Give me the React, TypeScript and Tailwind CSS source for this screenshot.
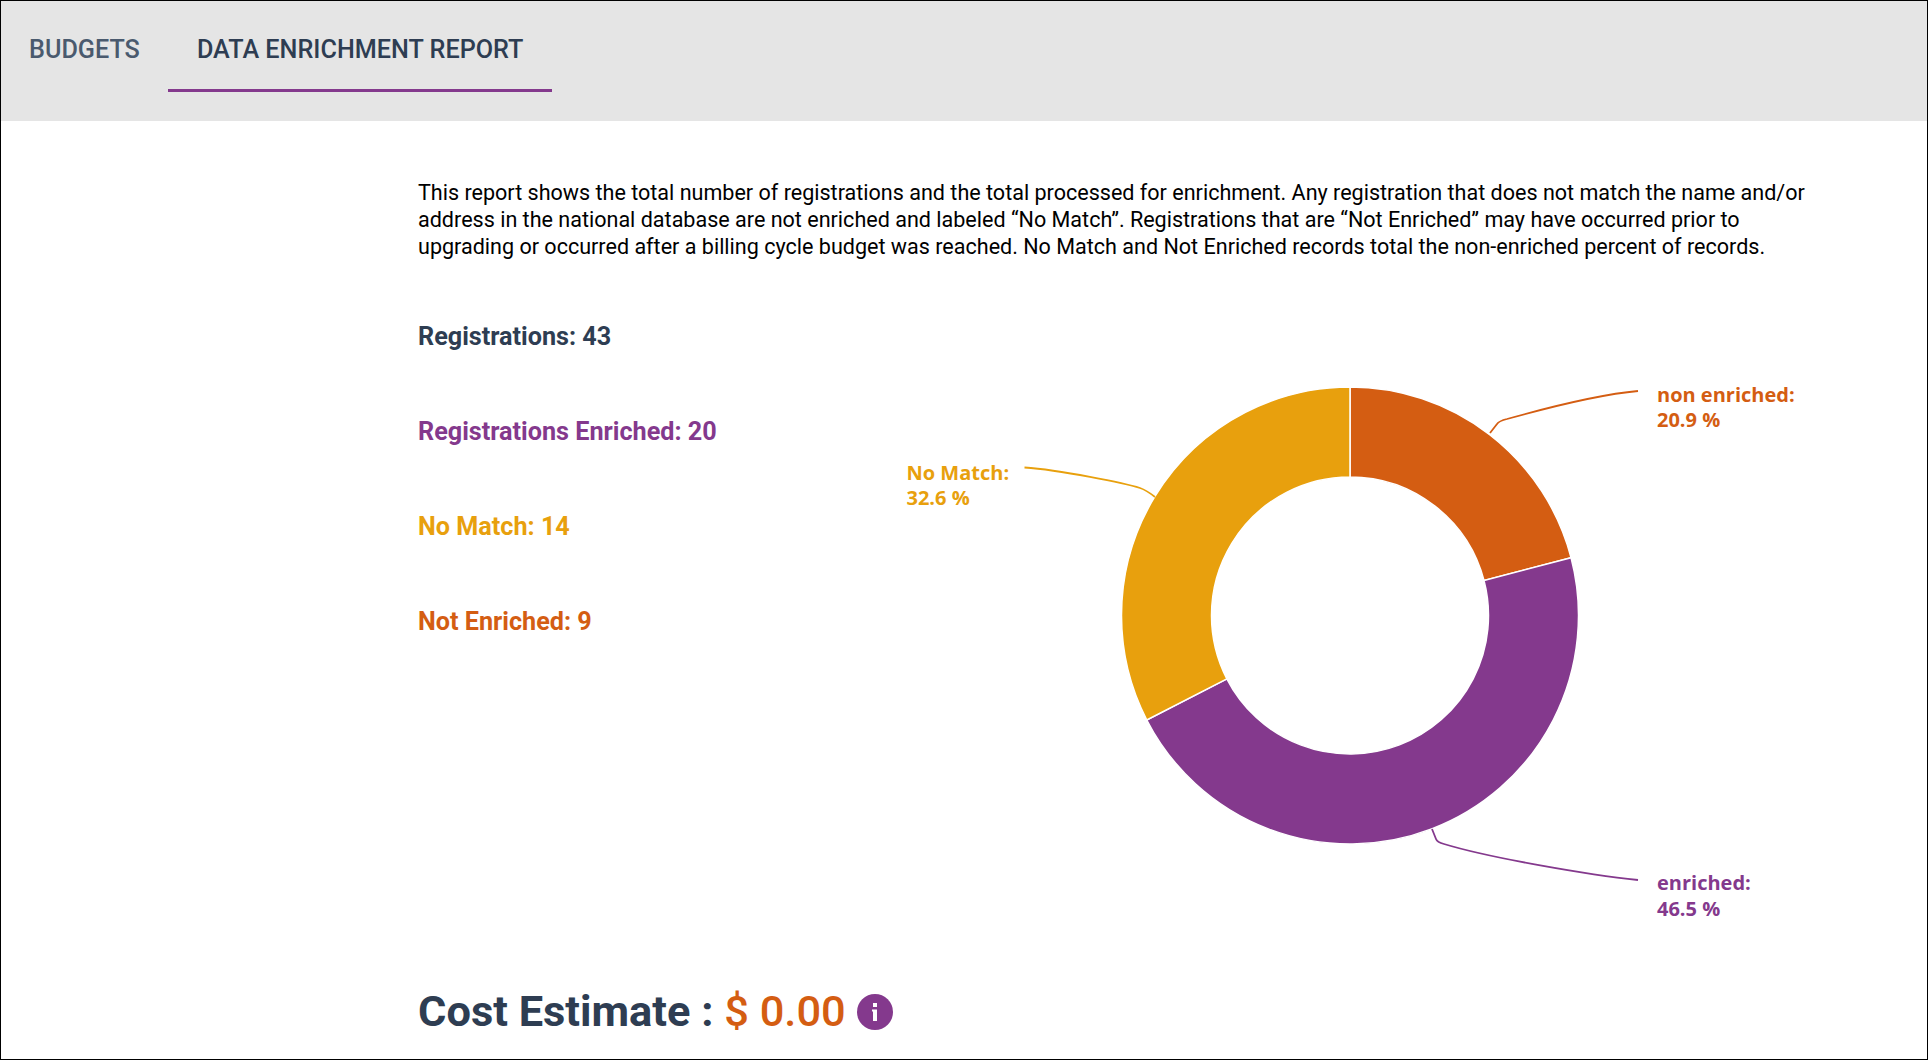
const slices = [
  { value: 9, color: '#d45d12' },
  { value: 20, color: '#84398d' },
  { value: 14, color: '#e8a00d' },
];

const CX = 1350;
const CY = 615.5;
const OUTER = 228.5;
const INNER = 138.5;

function point(r: number, turn: number) {
  const a = turn * 2 * Math.PI;
  return `${CX + r * Math.sin(a)} ${CY - r * Math.cos(a)}`;
}

function slicePath(from: number, to: number) {
  const large = to - from > 0.5 ? 1 : 0;
  return `M${point(OUTER, from)} A${OUTER} ${OUTER} 0 ${large} 1 ${point(OUTER, to)} L${point(INNER, to)} A${INNER} ${INNER} 0 ${large} 0 ${point(INNER, from)} Z`;
}

function DonutChart() {
  const total = slices.reduce((sum, s) => sum + s.value, 0);
  let acc = 0;
  return (
    <svg width="940" height="570" viewBox="880 370 940 570" className="mt-[85px] shrink-0">
      {slices.map((s) => {
        const from = acc / total;
        acc += s.value;
        return <path key={s.color} d={slicePath(from, acc / total)} fill={s.color} stroke="#ffffff" strokeWidth="1.5" />;
      })}
      <g fill="none" strokeWidth="1.8">
        <path d="M1024.5 467.5C1060 470 1125 483 1140 488C1146 490 1150 493 1155 497" stroke="#e8a00d" />
        <path d="M1490 433L1497 424C1499 421 1503 420 1507 419C1550 407 1605 394 1638 391" stroke="#d45d12" />
        <path d="M1432 829L1436 839C1437 842 1440 843 1444 844C1490 858 1590 875 1638 880" stroke="#84398d" />
      </g>
      <g className="font-['Open_Sans',sans-serif] text-[20px] font-bold">
        <text x="906.5" y="480" fill="#e8a00d">No Match:</text>
        <text x="906.5" y="505" fill="#e8a00d">32.6 %</text>
        <text x="1657" y="402" fill="#d45d12">non enriched:</text>
        <text x="1657" y="427" fill="#d45d12">20.9 %</text>
        <text x="1657" y="890" fill="#84398d">enriched:</text>
        <text x="1657" y="916" fill="#84398d">46.5 %</text>
      </g>
    </svg>
  );
}

export default function App() {
  return (
    <div className="h-[1060px] overflow-hidden border border-black bg-white font-['Roboto',sans-serif]">
      <div className="flex h-[120px] items-start bg-[#e5e5e5] text-[25.2px] font-medium">
        <div className="h-[91px] px-[28px] pt-[33px] leading-[32px] text-[#4a5a6e]">BUDGETS</div>
        <div className="h-[91px] border-b-[3px] border-[#84398d] px-[29px] pt-[33px] leading-[32px] text-[#2e3d52]">
          DATA ENRICHMENT REPORT
        </div>
      </div>

      <div className="pl-[417px] pr-[100px]">
        <p className="pt-[58px] text-[21.55px] leading-[27px] text-black">
          This report shows the total number of registrations and the total processed for enrichment. Any registration that does not match the name and/or address in the national database are not enriched and labeled “No Match”. Registrations that are “Not Enriched” may have occurred prior to upgrading or occurred after a billing cycle budget was reached. No Match and Not Enriched records total the non-enriched percent of records.
        </p>

        <div className="mt-[25px] flex h-[702px] items-start">
          <div className="flex w-[462px] shrink-0 flex-col gap-[63px] pt-[36px] text-[25.2px] font-bold leading-[32px]">
            <div className="text-[#2e3d52]">Registrations: 43</div>
            <div className="text-[#84398d]">Registrations Enriched: 20</div>
            <div className="text-[#e8a00d]">No Match: 14</div>
            <div className="text-[#d45d12]">Not Enriched: 9</div>
          </div>
          <DonutChart />
        </div>

        <div className="flex items-center gap-[11px] text-[43.4px] font-bold leading-[50px]">
          <div className="text-[#2e3d52]">
            Cost Estimate : <span className="font-medium text-[#d45d12]">$ 0.00</span>
          </div>
          <div className="flex h-[36px] w-[36px] items-center justify-center rounded-full bg-[#84398d]">
            <svg width="8" height="18" viewBox="0 0 8 18" fill="#ffffff">
              <rect x="2" y="0" width="4" height="4" />
              <path d="M1 6.5H6V18H2V8.5H1Z" />
            </svg>
          </div>
        </div>
      </div>
    </div>
  );
}
